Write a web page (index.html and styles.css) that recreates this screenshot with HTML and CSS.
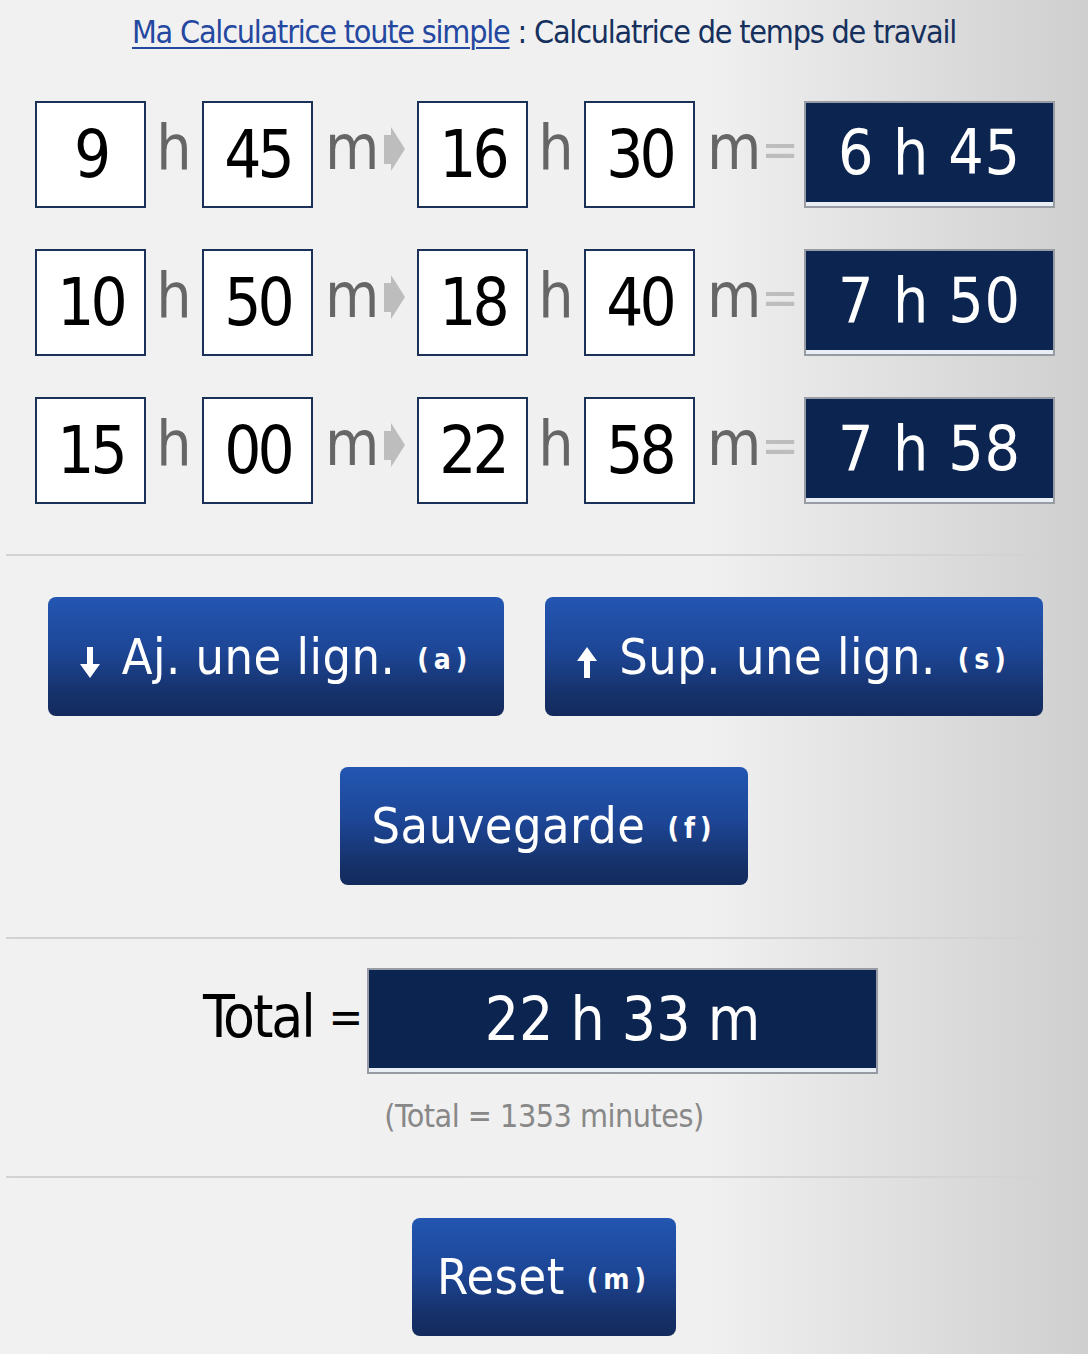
FILE: index.html
```html
<!DOCTYPE html>
<html lang="fr">
<head>
<meta charset="utf-8">
<title>Calculatrice de temps de travail</title>
<link rel="stylesheet" href="styles.css">
</head>
<body>
<h1 class="title"><a href="#" class="title-link">Ma Calculatrice toute simple</a> : Calculatrice de temps de travail</h1>

<div class="rows">
  <div class="row">
    <div class="box">9</div>
    <span class="slot-h"><span class="unit">h</span></span>
    <div class="box">45</div>
    <span class="slot-arrow"><span class="unit">m</span><svg class="arrow" viewBox="0 0 22 44" width="22" height="44"><polygon points="0,8 7,8 7,0 21,22 7,44 7,37 0,37"/></svg></span>
    <div class="box">16</div>
    <span class="slot-h"><span class="unit">h</span></span>
    <div class="box">30</div>
    <span class="slot-eq"><span class="unit">m</span><span class="eq">=</span></span>
    <div class="result">6 h 45</div>
  </div>
  <div class="row">
    <div class="box">10</div>
    <span class="slot-h"><span class="unit">h</span></span>
    <div class="box">50</div>
    <span class="slot-arrow"><span class="unit">m</span><svg class="arrow" viewBox="0 0 22 44" width="22" height="44"><polygon points="0,8 7,8 7,0 21,22 7,44 7,37 0,37"/></svg></span>
    <div class="box">18</div>
    <span class="slot-h"><span class="unit">h</span></span>
    <div class="box">40</div>
    <span class="slot-eq"><span class="unit">m</span><span class="eq">=</span></span>
    <div class="result">7 h 50</div>
  </div>
  <div class="row">
    <div class="box">15</div>
    <span class="slot-h"><span class="unit">h</span></span>
    <div class="box">00</div>
    <span class="slot-arrow"><span class="unit">m</span><svg class="arrow" viewBox="0 0 22 44" width="22" height="44"><polygon points="0,8 7,8 7,0 21,22 7,44 7,37 0,37"/></svg></span>
    <div class="box">22</div>
    <span class="slot-h"><span class="unit">h</span></span>
    <div class="box">58</div>
    <span class="slot-eq"><span class="unit">m</span><span class="eq">=</span></span>
    <div class="result">7 h 58</div>
  </div>
</div>

<hr class="sep sep-first">

<div class="btn-row">
  <button class="btn btn-add"><svg class="btn-icon" viewBox="0 0 20 31" width="20" height="31"><polygon points="7,0 13,0 13,17 20,17 10,31 0,17 7,17"/></svg><span class="btn-label">Aj. une lign.</span><span class="key">(a)</span></button>
  <button class="btn btn-del"><svg class="btn-icon" viewBox="0 0 20 31" width="20" height="31"><polygon points="10,0 20,14 13,14 13,31 7,31 7,14 0,14"/></svg><span class="btn-label">Sup. une lign.</span><span class="key">(s)</span></button>
</div>

<button class="btn btn-save"><span class="btn-label">Sauvegarde</span><span class="key">(f)</span></button>

<hr class="sep sep-second">

<div class="total-row">
  <span class="total-label">Total <span class="total-eq">=</span></span>
  <div class="total-box">22 h 33 m</div>
</div>
<p class="minutes">(Total = 1353 minutes)</p>

<hr class="sep sep-third">

<button class="btn btn-reset"><span class="btn-label">Reset</span><span class="key">(m)</span></button>
</body>
</html>
```

FILE: styles.css
```css
html, body {
  margin: 0;
  padding: 0;
}

body {
  min-height: 1354px;
  background: linear-gradient(90deg, #f1f1f1 0%, #f0f0f0 65%, #cfcfcf 100%);
  font-family: "DejaVu Sans Condensed", "Liberation Sans", sans-serif;
  overflow: hidden;
}

.title {
  margin: 0;
  padding-top: 12px;
  height: 89px;
  font-size: 32px;
  line-height: 40px;
  font-weight: normal;
  text-align: center;
  color: #16305e;
  letter-spacing: -1.2px;
}

.title-link {
  color: #2447a0;
  text-decoration: underline;
  text-decoration-thickness: 2px;
  text-underline-offset: 4px;
}

.rows {
  display: flex;
  flex-direction: column;
  gap: 41px;
  padding-left: 35px;
}

.row {
  display: flex;
  align-items: center;
  height: 107px;
}

.box {
  width: 111px;
  height: 107px;
  box-sizing: border-box;
  border: 2px solid #1c3157;
  background: #fff;
  display: flex;
  align-items: center;
  justify-content: center;
  font-size: 65px;
  letter-spacing: -4px;
  color: #000;
  line-height: 1;
  padding-right: 0;
}

.unit {
  font-size: 62px;
  line-height: 1;
  color: #666;
  padding-bottom: 14px;
}

.slot-h {
  width: 56px;
  display: flex;
  justify-content: center;
}

.slot-arrow {
  width: 104px;
  box-sizing: border-box;
  display: flex;
  align-items: center;
  justify-content: space-between;
  padding-left: 12px;
  padding-right: 11px;
}

.arrow {
  fill: #bdbdbd;
  margin-bottom: 12px;
}

.slot-eq {
  width: 109px;
  box-sizing: border-box;
  display: flex;
  align-items: center;
  justify-content: space-between;
  padding-left: 12px;
  padding-right: 9px;
}

.eq {
  font-size: 50px;
  line-height: 1;
  color: #bdbdbd;
  padding-bottom: 10px;
}

.result {
  width: 251px;
  height: 107px;
  box-sizing: border-box;
  background: #0c2450;
  border: 2px solid #979ca4;
  box-shadow: inset 0 -4px 0 #e9eef5;
  color: #fff;
  font-size: 62px;
  letter-spacing: 1px;
  display: flex;
  align-items: center;
  justify-content: center;
  padding-bottom: 4px;
  line-height: 1;
}

.sep {
  border: 0;
  height: 2px;
  background: #d3d3d3;
  margin: 0 44px 0 6px;
}

.sep-first {
  margin-top: 50px;
}

.btn-row {
  display: flex;
  gap: 41px;
  padding-left: 48px;
  margin-top: 41px;
}

.btn {
  height: 119px;
  border: 0;
  border-radius: 8px;
  background: linear-gradient(180deg, #2356b2 0%, #1d4696 45%, #16326c 80%, #132a5c 100%);
  color: #fff;
  font-family: inherit;
  display: flex;
  align-items: center;
  justify-content: center;
  padding: 0;
  cursor: pointer;
}

.btn-add {
  width: 456px;
}

.btn-del {
  width: 498px;
}

.btn-icon {
  fill: #fff;
  margin-right: 22px;
  margin-top: 12px;
}

.btn-label {
  font-size: 50px;
  letter-spacing: 0.5px;
  line-height: 1;
}

.key {
  font-size: 28px;
  font-weight: bold;
  letter-spacing: 5px;
  margin-left: 22px;
  line-height: 1;
  margin-top: 6px;
}

.btn-save {
  width: 408px;
  height: 118px;
  margin: 51px auto 0;
}

.sep-second {
  margin-top: 52px;
}

.total-row {
  display: flex;
  align-items: center;
  margin-top: 29px;
  padding-left: 203px;
}

.total-label {
  flex: none;
  width: 164px;
  white-space: nowrap;
  font-size: 58px;
  letter-spacing: -2px;
  line-height: 1;
  color: #000;
  padding-bottom: 8px;
}

.total-eq {
  font-size: 46px;
  letter-spacing: 0;
  vertical-align: 4px;
}

.total-box {
  width: 511px;
  height: 106px;
  box-sizing: border-box;
  background: #0c2450;
  border: 2px solid #979ca4;
  box-shadow: inset 0 -4px 0 #e9eef5;
  color: #fff;
  font-size: 60px;
  letter-spacing: 0;
  display: flex;
  align-items: center;
  justify-content: center;
  padding-bottom: 4px;
  line-height: 1;
}

.minutes {
  margin: 22px 0 0;
  font-size: 32px;
  line-height: 40px;
  letter-spacing: -0.5px;
  color: #888;
  text-align: center;
}

.sep-third {
  margin-top: 40px;
}

.btn-reset {
  width: 264px;
  height: 118px;
  margin: 40px auto 0;
}
```
